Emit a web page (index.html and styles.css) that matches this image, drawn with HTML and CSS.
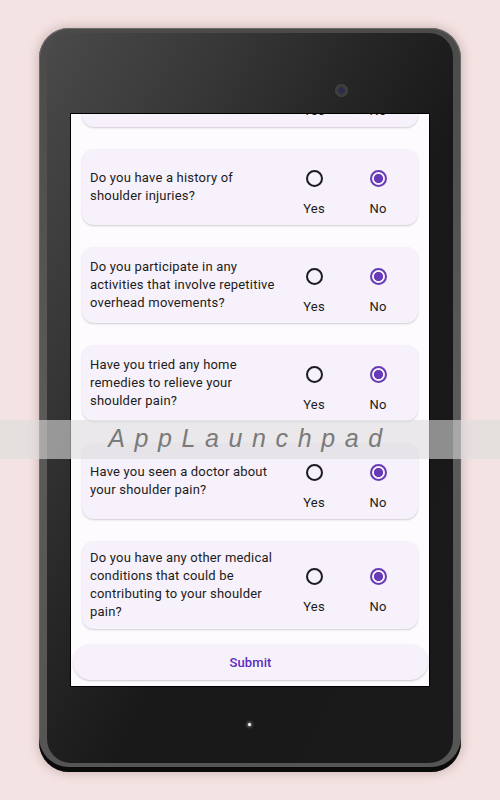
FILE: index.html
```html
<!DOCTYPE html>
<html>
<head>
<meta charset="utf-8">
<link rel="stylesheet" href="styles.css">
</head>
<body>
<div class="tablet">
  <div class="bezel">
    <span class="camera"></span>
    <div class="screen">
      <div class="list">
        <div class="card">
          <div class="q">Do you experience shoulder pain when lifting objects?</div>
          <div class="opt"><span class="radio"></span><span class="lbl">Yes</span></div>
          <div class="opt"><span class="radio on"></span><span class="lbl">No</span></div>
        </div>
        <div class="card">
          <div class="q">Do you have a history of shoulder injuries?</div>
          <div class="opt"><span class="radio"></span><span class="lbl">Yes</span></div>
          <div class="opt"><span class="radio on"></span><span class="lbl">No</span></div>
        </div>
        <div class="card">
          <div class="q">Do you participate in any activities that involve repetitive overhead movements?</div>
          <div class="opt"><span class="radio"></span><span class="lbl">Yes</span></div>
          <div class="opt"><span class="radio on"></span><span class="lbl">No</span></div>
        </div>
        <div class="card">
          <div class="q">Have you tried any home remedies to relieve your shoulder pain?</div>
          <div class="opt"><span class="radio"></span><span class="lbl">Yes</span></div>
          <div class="opt"><span class="radio on"></span><span class="lbl">No</span></div>
        </div>
        <div class="card">
          <div class="q">Have you seen a doctor about your shoulder pain?</div>
          <div class="opt"><span class="radio"></span><span class="lbl">Yes</span></div>
          <div class="opt"><span class="radio on"></span><span class="lbl">No</span></div>
        </div>
        <div class="card">
          <div class="q">Do you have any other medical conditions that could be contributing to your shoulder pain?</div>
          <div class="opt"><span class="radio"></span><span class="lbl">Yes</span></div>
          <div class="opt"><span class="radio on"></span><span class="lbl">No</span></div>
        </div>
      </div>
      <button class="submit">Submit</button>
    </div>
    <span class="home"></span>
  </div>
</div>
<div class="watermark"><span>AppLaunchpad</span></div>
</body>
</html>
```
FILE: styles.css
```css
html, body {
  margin: 0;
  padding: 0;
}
body {
  width: 500px;
  height: 800px;
  background: #f3e3e2;
  display: flex;
  align-items: center;
  justify-content: center;
  font-family: Roboto, "Noto Sans", sans-serif;
  position: relative;
  overflow: hidden;
}
.tablet {
  width: 422px;
  height: 744px;
  box-sizing: border-box;
  padding: 5px 8px 9px 8px;
  border-radius: 30px;
  background: linear-gradient(180deg, #4a4a4a 0%, #5a5a5a 50%, #555 100%);
  box-shadow: 0 0 10px 2px rgba(120, 80, 80, 0.28), inset 0 -5px 0 #0a0a0a, inset 0 0 0 1px #6a6a6a;
}
.bezel {
  position: relative;
  height: 100%;
  box-sizing: border-box;
  border-radius: 24px;
  padding: 81px 24px 77px 24px;
  background: linear-gradient(118deg, #4a4a4a 0%, #383838 22%, #252525 42%, #181818 58%, #1a1a1a 100%);
  display: flex;
  flex-direction: column;
}
.camera {
  position: absolute;
  left: 288px;
  top: 51px;
  width: 13px;
  height: 13px;
  border-radius: 50%;
  background: radial-gradient(circle, #2b2e48 0 3px, #3a3a3c 3.5px 5px, #444 5.5px);
}
.home {
  position: absolute;
  left: 201px;
  top: 690px;
  width: 3px;
  height: 3px;
  border-radius: 50%;
  background: #fff;
  box-shadow: 0 0 3px 1px rgba(255, 255, 255, 0.45);
}
.screen {
  flex: 1;
  background: #fefbff;
  overflow: hidden;
  display: flex;
  flex-direction: column;
  box-shadow: 0 0 0 1px #000;
}
.list {
  margin-top: -63px;
  padding: 0 11px;
  display: flex;
  flex-direction: column;
  gap: 22px;
}
.card {
  background: #f6f1fa;
  border-radius: 12px;
  box-shadow: 0 1px 2px rgba(0, 0, 0, 0.18);
  min-height: 76px;
  box-sizing: border-box;
  padding: 8px;
  display: grid;
  grid-template-columns: 1fr 64px 64px;
  align-items: center;
}
.q {
  font-size: 13px;
  line-height: 18px;
  letter-spacing: 0.2px;
  color: #1d1b20;
  padding-right: 6px;
}
.opt {
  display: flex;
  flex-direction: column;
  align-items: center;
}
.radio {
  width: 40px;
  height: 40px;
  display: flex;
  align-items: center;
  justify-content: center;
}
.radio::before {
  content: "";
  width: 13px;
  height: 13px;
  border: 2px solid #1d1b20;
  border-radius: 50%;
  box-sizing: content-box;
}
.radio.on::before {
  border-color: #673ab7;
  background: radial-gradient(circle, #673ab7 0 4.3px, transparent 4.8px);
}
.lbl {
  font-size: 13px;
  line-height: 18px;
  letter-spacing: 0.2px;
  color: #1d1b20;
  margin-top: 2px;
  margin-bottom: -2px;
}
.submit {
  margin: 15px 1px 0 2px;
  height: 36px;
  border: none;
  border-radius: 18px;
  background: #f6f1fa;
  box-shadow: 0 1px 2px rgba(0, 0, 0, 0.2);
  color: #5b2cc0;
  font-family: Roboto, sans-serif;
  font-size: 13px;
  font-weight: 500;
  letter-spacing: 0.1px;
  padding: 0;
}
.watermark {
  position: absolute;
  left: 0;
  top: 420px;
  width: 500px;
  height: 39px;
  background: rgba(220, 220, 220, 0.6);
  display: flex;
  align-items: center;
  justify-content: center;
}
.watermark span {
  font-family: "Liberation Sans", Arial, sans-serif;
  font-style: italic;
  font-size: 25px;
  letter-spacing: 9.6px;
  color: #7a7a7a;
  padding-left: 0;
  margin-top: -3px;
}
```
